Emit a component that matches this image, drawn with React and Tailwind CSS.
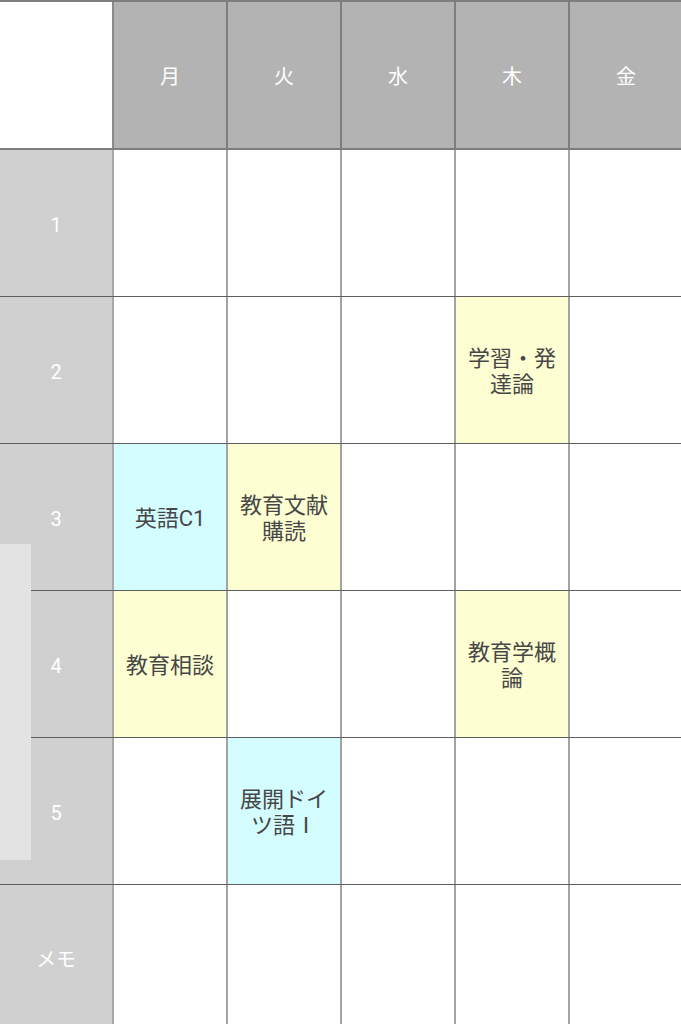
import React from 'react';

const days = ['月', '火', '水', '木', '金'];

const cyan = 'bg-[#d3fdfe]';
const yellow = 'bg-[#fefed3]';

// period -> day index -> { name, color }
const classes = {
  2: { 3: { name: '学習・発達論', color: yellow } },
  3: { 0: { name: '英語C1', color: cyan }, 1: { name: '教育文献購読', color: yellow } },
  4: { 0: { name: '教育相談', color: yellow }, 3: { name: '教育学概論', color: yellow } },
  5: { 1: { name: '展開ドイツ語Ⅰ', color: cyan } },
};

const rows = ['1', '2', '3', '4', '5', 'メモ'];

const Cell = ({ item }) => (
  <div
    className={`w-[114px] shrink-0 border-r-2 border-[#a3a3a3] flex items-center justify-center px-2 pt-1 ${item ? item.color : 'bg-white'}`}
  >
    {item && (
      <span className="text-[22px] leading-[26px] text-[#474747] text-center break-all">
        {item.name}
      </span>
    )}
  </div>
);

export default function App() {
  return (
    <div
      className="relative w-[681px] h-[1024px] overflow-hidden bg-white"
      style={{ fontFamily: 'Roboto, "Noto Sans CJK JP", sans-serif' }}
    >
      <div className="flex h-[150px] border-t-2 border-b-2 border-[#7e7e7e]">
        <div className="w-[114px] shrink-0 bg-white border-r-2 border-[#8a8a8a]" />
        {days.map((d) => (
          <div
            key={d}
            className="w-[114px] shrink-0 bg-[#b3b3b3] border-r-2 border-[#7e7e7e] flex items-center justify-center pt-1 text-white text-[20px]"
          >
            {d}
          </div>
        ))}
      </div>

      {rows.map((r, i) => (
        <div key={r} className="flex h-[147px] border-b border-[#5e5e5e]">
          <div className="w-[114px] shrink-0 bg-[#d0d0d0] border-r-2 border-[#a8a8a8] flex items-center justify-center pt-1 text-white text-[20px]">
            {r}
          </div>
          {days.map((d, j) => (
            <Cell key={d} item={classes[i + 1] && classes[i + 1][j]} />
          ))}
        </div>
      ))}

      <div className="absolute left-0 top-[544px] w-[31px] h-[316px] bg-[#e3e3e3]" />
    </div>
  );
}
